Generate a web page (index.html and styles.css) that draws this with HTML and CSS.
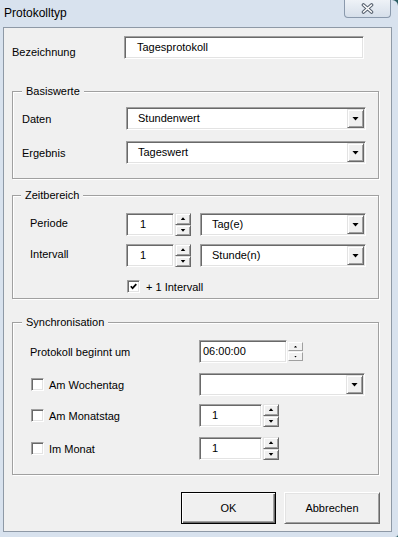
FILE: index.html
```html
<!DOCTYPE html>
<html lang="de">
  <head>
    <meta charset="UTF-8" />
    <meta name="viewport" content="width=device-width, initial-scale=1.0" />
    <title>Protokolltyp</title>
    <link rel="stylesheet" href="styles.css">
  </head>
  <body>
    <div class="window">
      <div class="titlebar">
        <span class="title">Protokolltyp</span>
        <div class="close">
          <svg width="13" height="11" viewBox="0 0 13 11">
            <path d="M2.5 2 L10.5 9 M10.5 2 L2.5 9" stroke="#56606e" stroke-width="3.6" stroke-linecap="round" fill="none" />
            <path d="M2.5 2 L10.5 9 M10.5 2 L2.5 9" stroke="#fff" stroke-width="1.6" stroke-linecap="round" fill="none" />
          </svg>
        </div>
      </div>
      <div class="client">
        <div class="name-row">
          <span class="name-label">Bezeichnung</span>
          <div class="sunken name-field">Tagesprotokoll</div>
        </div>

        <div class="group base">
          <div class="group-title">Basiswerte</div>
          <div class="row">
            <span class="label">Daten</span>
            <div class="sunken combo wide">
              <span class="value">Stundenwert</span>
              <span class="raised drop"><i class="arrow-down"></i></span>
            </div>
          </div>
          <div class="row">
            <span class="label">Ergebnis</span>
            <div class="sunken combo wide">
              <span class="value">Tageswert</span>
              <span class="raised drop"><i class="arrow-down"></i></span>
            </div>
          </div>
        </div>

        <div class="group range">
          <div class="group-title">Zeitbereich</div>
          <div class="row">
            <span class="label">Periode</span>
            <div class="sunken spin-field">1</div>
            <div class="spin">
              <span class="raised spin-btn"><i class="arrow-up"></i></span>
              <span class="raised spin-btn"><i class="arrow-small-down"></i></span>
            </div>
            <div class="sunken combo short">
              <span class="value">Tag(e)</span>
              <span class="raised drop"><i class="arrow-down"></i></span>
            </div>
          </div>
          <div class="row">
            <span class="label">Intervall</span>
            <div class="sunken spin-field">1</div>
            <div class="spin">
              <span class="raised spin-btn"><i class="arrow-up"></i></span>
              <span class="raised spin-btn"><i class="arrow-small-down"></i></span>
            </div>
            <div class="sunken combo short">
              <span class="value">Stunde(n)</span>
              <span class="raised drop"><i class="arrow-down"></i></span>
            </div>
          </div>
          <div class="check-row">
            <span class="checkbox">
              <svg width="7" height="7" viewBox="0 0 7 7">
                <polyline points="0.8,3.2 2.6,5.2 6.3,1.2" stroke="#000" stroke-width="1.7" fill="none" />
              </svg>
            </span>
            <span>+ 1 Intervall</span>
          </div>
        </div>

        <div class="group sync">
          <div class="group-title">Synchronisation</div>
          <div class="row">
            <span class="label">Protokoll beginnt um</span>
            <div class="sunken time-field">06:00:00</div>
            <div class="time-spin">
              <span class="time-btn"><i class="tiny-up"></i></span>
              <span class="time-btn"><i class="tiny-down"></i></span>
            </div>
          </div>
          <div class="row">
            <span class="label check-label"><span class="checkbox"></span>Am Wochentag</span>
            <div class="sunken combo short">
              <span class="value"></span>
              <span class="raised drop"><i class="arrow-down"></i></span>
            </div>
          </div>
          <div class="row tight">
            <span class="label check-label"><span class="checkbox"></span>Am Monatstag</span>
            <div class="sunken spin-field day">1</div>
            <div class="spin">
              <span class="raised spin-btn"><i class="arrow-up"></i></span>
              <span class="raised spin-btn"><i class="arrow-small-down"></i></span>
            </div>
          </div>
          <div class="row">
            <span class="label check-label"><span class="checkbox"></span>Im Monat</span>
            <div class="sunken spin-field day">1</div>
            <div class="spin">
              <span class="raised spin-btn"><i class="arrow-up"></i></span>
              <span class="raised spin-btn"><i class="arrow-small-down"></i></span>
            </div>
          </div>
        </div>

        <div class="buttons">
          <div class="btn default">OK</div>
          <div class="btn">Abbrechen</div>
        </div>
      </div>
    </div>
  </body>
</html>
```

FILE: styles.css
```css
body {
  margin: 0;
  background-color: #2b5d62;
  font-family: "Liberation Sans", Arial, sans-serif;
  font-size: 11px;
  color: #000;
}
.window {
  width: 398px;
  height: 537px;
  background-color: #d8e2ee;
  border-radius: 0 6px 3px 0;
  display: flex;
  flex-direction: column;
}
.titlebar {
  height: 27px;
  display: flex;
  align-items: flex-start;
  flex-shrink: 0;
}
.title {
  padding: 6px 0 0 4px;
  font-size: 12px;
  line-height: 15px;
}
.close {
  margin-left: auto;
  margin-right: 7px;
  width: 47px;
  height: 18px;
  box-sizing: border-box;
  border: 1px solid #8a99ac;
  border-top: none;
  border-radius: 0 0 4px 4px;
  background: linear-gradient(#eef2f7, #d6dfea);
  display: flex;
  justify-content: center;
  align-items: center;
}
.client {
  margin-left: 3px;
  width: 389px;
  height: 505px;
  box-sizing: border-box;
  border: 1px solid #8e99a6;
  background-color: #f0f0f0;
  display: flex;
  flex-direction: column;
}

/* 3d edges */
.sunken {
  box-sizing: border-box;
  border: 1px solid;
  border-color: #a0a0a0 #fff #fff #a0a0a0;
  box-shadow: inset 1px 1px 0 #696969, inset -1px -1px 0 #e3e3e3;
  background-color: #fff;
}
.raised {
  box-sizing: border-box;
  border: 1px solid;
  border-color: #e3e3e3 #696969 #696969 #e3e3e3;
  box-shadow: inset 1px 1px 0 #fff, inset -1px -1px 0 #a0a0a0;
  background-color: #f0f0f0;
}

.name-row {
  margin: 8px 0 0 8px;
  height: 23px;
  display: flex;
  align-items: center;
}
.name-label {
  width: 112px;
  padding-top: 8px;
}
.name-field {
  width: 240px;
  height: 23px;
  padding-left: 12px;
  line-height: 21px;
}

.group {
  margin: 32px 0 0 8px;
  width: 367px;
  box-sizing: border-box;
  border: 1px solid #a0a0a0;
  box-shadow: inset 1px 1px 0 #fff, 1px 1px 0 #fff;
  display: flex;
  flex-direction: column;
}
.group-title {
  align-self: flex-start;
  margin-top: -7px;
  padding: 0 4px;
  line-height: 13px;
  background-color: #f0f0f0;
}
.row {
  height: 23px;
  display: flex;
  align-items: center;
}
.label {
  flex-shrink: 0;
}

.base {
  padding: 0 0 14px 9px;
}
.base .group-title {
  margin-left: 0;
}
.base .label {
  width: 104px;
}
.base .group-title + .row {
  margin-top: 9px;
}
.base .row + .row {
  margin-top: 11px;
}

.range {
  margin-top: 16px;
  padding: 0 0 5px 17px;
}
.range .group-title {
  margin-left: -9px;
}
.range .label {
  width: 96px;
  padding-bottom: 3px;
}
.range .group-title + .row {
  margin-top: 11px;
}
.range .row + .row {
  margin-top: 8px;
}
.check-row {
  margin-top: 13px;
  height: 13px;
  padding-left: 97px;
  display: flex;
  align-items: center;
}
.check-row .checkbox {
  margin-right: 6px;
}

.sync {
  margin-top: 23px;
  padding: 0 0 14px 17px;
}
.sync .group-title {
  margin-left: -8px;
}
.sync .label {
  width: 169px;
}
.sync .row {
  margin-top: 10px;
}
.sync .group-title + .row {
  margin-top: 11px;
}
.sync .row.tight {
  margin-top: 8px;
}
.check-label {
  display: flex;
  align-items: center;
}
.check-label .checkbox {
  margin: 0 5px 0 1px;
}

.combo {
  height: 23px;
  padding: 1px 1px 1px 11px;
  display: flex;
}
.combo.wide {
  width: 240px;
}
.combo.short {
  width: 166px;
}
.combo .value {
  flex: 1;
  line-height: 19px;
}
.drop {
  width: 17px;
  display: flex;
  justify-content: center;
  align-items: center;
}
.arrow-down {
  width: 7px;
  height: 4px;
  background-color: #000;
  clip-path: polygon(0 0, 100% 0, 50% 100%);
}

.spin-field {
  width: 48px;
  height: 23px;
  padding-left: 13px;
  line-height: 21px;
}
.spin-field.day {
  width: 63px;
  padding-left: 12px;
}
.spin {
  width: 16px;
  height: 23px;
  margin: 0 9px 0 1px;
  display: flex;
  flex-direction: column;
}
.spin-btn {
  flex: 1;
  display: flex;
  justify-content: center;
  align-items: center;
}
.arrow-up {
  width: 5px;
  height: 3px;
  background-color: #000;
  clip-path: polygon(50% 0, 100% 100%, 0 100%);
}
.arrow-small-down {
  width: 5px;
  height: 3px;
  background-color: #000;
  clip-path: polygon(0 0, 100% 0, 50% 100%);
}

.time-field {
  width: 88px;
  height: 23px;
  padding-left: 3px;
  line-height: 21px;
}
.time-spin {
  width: 16px;
  height: 23px;
  padding: 2px 0 2px 1px;
  box-sizing: border-box;
  display: flex;
  flex-direction: column;
  gap: 1px;
}
.time-btn {
  flex: 1;
  box-sizing: border-box;
  border: 1px solid;
  border-color: #fff #a0a0a0 #a0a0a0 #fff;
  background-color: #f2f2f2;
  display: flex;
  justify-content: center;
  align-items: center;
}
.tiny-up {
  width: 3px;
  height: 2px;
  background-color: #000;
  clip-path: polygon(50% 0, 100% 100%, 0 100%);
}
.tiny-down {
  width: 3px;
  height: 2px;
  background-color: #000;
  clip-path: polygon(0 0, 100% 0, 50% 100%);
}

.checkbox {
  width: 13px;
  height: 13px;
  flex-shrink: 0;
  box-sizing: border-box;
  border: 1px solid;
  border-color: #a0a0a0 #fff #fff #a0a0a0;
  box-shadow: inset 1px 1px 0 #696969, inset -1px -1px 0 #e3e3e3;
  background-color: #fff;
  display: flex;
  justify-content: center;
  align-items: center;
}

.buttons {
  margin: 17px 11px 0 0;
  display: flex;
  justify-content: flex-end;
  gap: 8px;
}
.btn {
  width: 96px;
  height: 32px;
  box-sizing: border-box;
  border: 1px solid;
  border-color: #fff #696969 #696969 #fff;
  box-shadow: inset 1px 1px 0 #e3e3e3, inset -1px -1px 0 #a0a0a0;
  background-color: #f0f0f0;
  display: flex;
  justify-content: center;
  align-items: center;
}
.btn.default {
  width: 95px;
  border: 1px solid #000;
  box-shadow: inset 1px 1px 0 #fff, inset -1px -1px 0 #696969, inset -2px -2px 0 #a0a0a0;
}
```
